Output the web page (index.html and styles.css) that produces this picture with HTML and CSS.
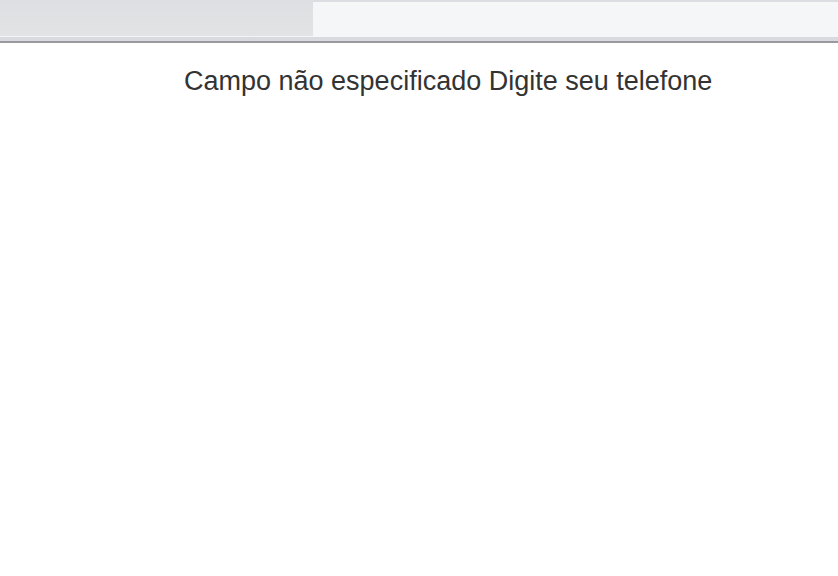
FILE: index.html
```html
<!DOCTYPE html>
<html lang="pt">
<head>
<meta charset="utf-8">
<link rel="stylesheet" href="styles.css">
</head>
<body>
<div class="chrome">
  <div class="tabs">
    <div class="tab-left"></div>
    <div class="tab-right"></div>
  </div>
  <div class="strip"></div>
  <div class="edge"></div>
</div>
<main class="content">
  <p class="message">Campo não especificado Digite seu telefone</p>
</main>
</body>
</html>
```
FILE: styles.css
```css
html, body {
  margin: 0;
  padding: 0;
  background: #ffffff;
}
body {
  font-family: "Liberation Sans", Arial, sans-serif;
  width: 838px;
  height: 576px;
  overflow: hidden;
}
.chrome {
  display: flex;
  flex-direction: column;
}
.tabs {
  display: flex;
  height: 37px;
  background: #dcdde2;
}
.tab-left {
  width: 313px;
  height: 36px;
  background: linear-gradient(to bottom, #dedfe2, #e2e3e5);
  border-bottom: 1px solid #f4f5f6;
}
.tab-right {
  flex: 1;
  margin-top: 2px;
  height: 35px;
  background: #f5f6f8;
}
.strip {
  height: 4px;
  background: #d9dadf;
}
.edge {
  height: 2px;
  background: #9a9a9e;
}
.content {
  padding-left: 184px;
}
.message {
  margin: 23px 0 0 0;
  font-size: 27px;
  color: #333333;
  line-height: 31px;
}
```
